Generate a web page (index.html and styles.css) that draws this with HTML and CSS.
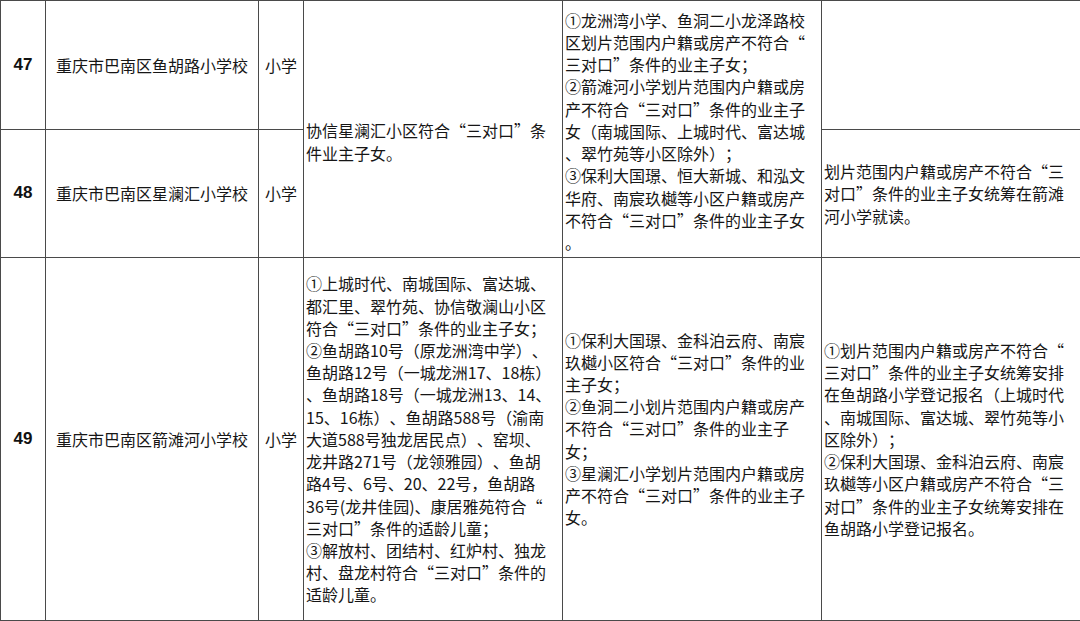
FILE: index.html
```html
<!DOCTYPE html>
<html lang="zh-CN">
<head>
<meta charset="utf-8">
<title>学区划片表</title>
<link rel="stylesheet" href="styles.css">
</head>
<body>
<table class="grid">
  <colgroup>
    <col class="c-no">
    <col class="c-name">
    <col class="c-type">
    <col class="c-wide">
    <col class="c-wide">
    <col class="c-wide">
  </colgroup>
  <tbody>
    <tr class="r47">
      <td class="no">47</td>
      <td class="name">重庆市巴南区鱼胡路小学校</td>
      <td class="type">小学</td>
      <td class="txt shift-down" rowspan="2">协信星澜汇小区符合“三对口”条<br>件业主子女。</td>
      <td class="txt shift-top" rowspan="2">①龙洲湾小学、鱼洞二小龙泽路校<br>区划片范围内户籍或房产不符合“<br>三对口”条件的业主子女；<br>②箭滩河小学划片范围内户籍或房<br>产不符合“三对口”条件的业主子<br>女（南城国际、上城时代、富达城<br>、翠竹苑等小区除外）；<br>③保利大国璟、恒大新城、和泓文<br>华府、南宸玖樾等小区户籍或房产<br>不符合“三对口”条件的业主子女<br>。</td>
      <td class="txt"></td>
    </tr>
    <tr class="r48">
      <td class="no">48</td>
      <td class="name">重庆市巴南区星澜汇小学校</td>
      <td class="type">小学</td>
      <td class="txt">划片范围内户籍或房产不符合“三<br>对口”条件的业主子女统筹在箭滩<br>河小学就读。</td>
    </tr>
    <tr class="r49">
      <td class="no">49</td>
      <td class="name">重庆市巴南区箭滩河小学校</td>
      <td class="type">小学</td>
      <td class="txt">①上城时代、南城国际、富达城、<br>都汇里、翠竹苑、协信敬澜山小区<br>符合“三对口”条件的业主子女；<br>②鱼胡路10号（原龙洲湾中学）、<br>鱼胡路12号（一城龙洲17、18栋）<br>、鱼胡路18号（一城龙洲13、14、<br>15、16栋）、鱼胡路588号（渝南<br>大道588号独龙居民点）、窑坝、<br>龙井路271号（龙领雅园）、鱼胡<br>路4号、6号、20、22号，鱼胡路<br>36号(龙井佳园)、康居雅苑符合“<br>三对口”条件的适龄儿童；<br>③解放村、团结村、红炉村、独龙<br>村、盘龙村符合“三对口”条件的<br>适龄儿童。</td>
      <td class="txt shift-up">①保利大国璟、金科泊云府、南宸<br>玖樾小区符合“三对口”条件的业<br>主子女；<br>②鱼洞二小划片范围内户籍或房产<br>不符合“三对口”条件的业主子<br>女；<br>③星澜汇小学划片范围内户籍或房<br>产不符合“三对口”条件的业主子<br>女。</td>
      <td class="txt">①划片范围内户籍或房产不符合“<br>三对口”条件的业主子女统筹安排<br>在鱼胡路小学登记报名（上城时代<br>、南城国际、富达城、翠竹苑等小<br>区除外）；<br>②保利大国璟、金科泊云府、南宸<br>玖樾等小区户籍或房产不符合“三<br>对口”条件的业主子女统筹安排在<br>鱼胡路小学登记报名。</td>
    </tr>
  </tbody>
</table>
</body>
</html>
```
FILE: styles.css
```css
html, body {
  margin: 0;
  padding: 0;
  background: #ffffff;
}
body {
  width: 1080px;
  height: 621px;
  overflow: hidden;
  font-family: "Noto Sans CJK SC", "Noto Sans", sans-serif;
  color: #161616;
  text-spacing-trim: space-all;
}
.grid {
  border-collapse: collapse;
  table-layout: fixed;
  width: 1080px;
}
.c-no { width: 45px; }
.c-name { width: 213px; }
.c-type { width: 45px; }
.c-wide { width: 259px; }
.grid td {
  border: 1px solid #4a4a4a;
  padding: 0 2px;
  vertical-align: middle;
  font-size: 16px;
  line-height: 22.2px;
  white-space: nowrap;
  overflow: hidden;
  text-spacing-trim: space-all;
}
.r47 { height: 129px; }
.r48 { height: 128px; }
.r49 { height: 363px; }
.grid td.no {
  text-align: center;
  font-family: "Liberation Sans", Arial, sans-serif;
  font-weight: bold;
  font-size: 17px;
  color: #111111;
}
.grid td.name,
.grid td.type {
  text-align: center;
}
.grid td.txt {
  text-align: left;
  padding-left: 2px;
}
.grid td.shift-down { padding-top: 25px; }
.grid td.shift-top { padding-top: 4px; }
.grid td.shift-up { padding-bottom: 21px; }
```
